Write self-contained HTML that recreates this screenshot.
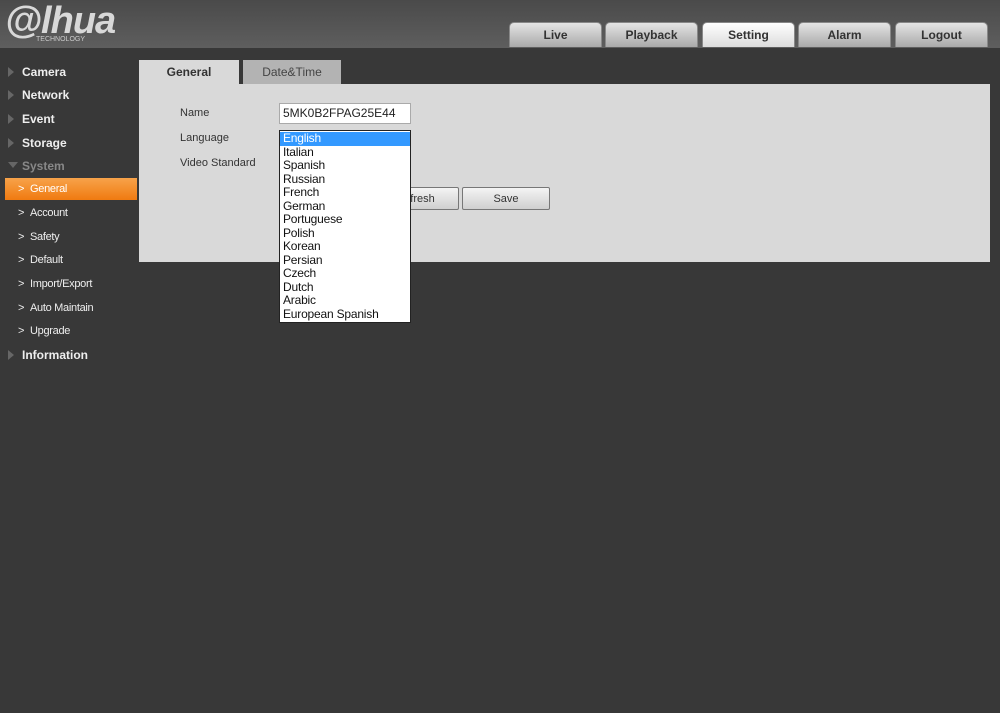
<!DOCTYPE html>
<html><head><style>
body{margin:0;width:1000px;height:713px;background:#383838;font-family:"Liberation Sans",Arial,sans-serif;position:relative;overflow:hidden}
.hdr{position:absolute;left:0;top:0;width:1000px;height:48px;background:linear-gradient(#4a4a4a,#5e5e5e)}
.logo{position:absolute;left:5px;top:0px;font-size:38px;font-weight:bold;font-style:italic;color:#d8d8d8;letter-spacing:-1px}
.tech{position:absolute;left:36px;top:36px;font-size:7px;color:#ccc}
.tt{position:absolute;top:22px;height:25px;width:93px;border-radius:5px 5px 0 0;background:linear-gradient(#e4e4e4,#a9a9a9);font-size:12px;font-weight:bold;color:#333;text-align:center;line-height:25px;box-sizing:border-box;border:1px solid #888;border-bottom:none}
.tt.on{background:linear-gradient(#fff,#dcdcdc)}
.nav{position:absolute;left:22px;font-size:12px;font-weight:bold;color:#eee}
.tri{position:absolute;left:8px;width:0;height:0;border-left:6px solid #666;border-top:5px solid transparent;border-bottom:5px solid transparent}
.sub{position:absolute;left:30px;font-size:11px;color:#eee;letter-spacing:-0.3px}
.chev{position:absolute;left:18px;font-size:11px;color:#eee}
.panel{position:absolute;left:139px;top:84px;width:851px;height:178px;background:#d9d9d9}
.lbl{position:absolute;font-size:11px;color:#333}
.btn{position:absolute;top:187px;height:23px;border:1px solid #777;border-radius:2px;background:linear-gradient(#f4f4f4,#cfcfcf);font-size:11px;color:#333;text-align:center;line-height:23px;box-sizing:border-box}
.dd{position:absolute;left:279px;top:130px;width:132px;height:193px;background:#fff;border:1px solid #222;box-sizing:border-box;font-size:12px;color:#111;padding-top:1px}
.dd div{height:13.5px;line-height:13.5px;padding-left:3px;letter-spacing:-0.2px}
</style></head><body>
<div class="hdr"><div class="logo">@lhua</div><div class="tech">TECHNOLOGY</div>
<div class="tt" style="left:509px">Live</div>
<div class="tt" style="left:605px">Playback</div>
<div class="tt on" style="left:702px">Setting</div>
<div class="tt" style="left:798px">Alarm</div>
<div class="tt" style="left:895px">Logout</div>
</div>
<div class="tri" style="top:67px"></div><div class="nav" style="top:65px">Camera</div>
<div class="tri" style="top:90px"></div><div class="nav" style="top:88px">Network</div>
<div class="tri" style="top:114px"></div><div class="nav" style="top:112px">Event</div>
<div class="tri" style="top:138px"></div><div class="nav" style="top:136px">Storage</div>
<div style="position:absolute;left:8px;top:162px;border-top:6px solid #666;border-left:5px solid transparent;border-right:5px solid transparent"></div><div class="nav" style="top:159px;color:#888">System</div>
<div style="position:absolute;left:5px;top:178px;width:132px;height:22px;background:linear-gradient(#f7a34a,#f07a10)"></div>
<div class="chev" style="top:183px;color:#fff">&gt;</div><div class="sub" style="top:183px;color:#fff">General</div>
<div class="chev" style="top:207px">&gt;</div><div class="sub" style="top:207px">Account</div>
<div class="chev" style="top:231px">&gt;</div><div class="sub" style="top:231px">Safety</div>
<div class="chev" style="top:254px">&gt;</div><div class="sub" style="top:254px">Default</div>
<div class="chev" style="top:278px">&gt;</div><div class="sub" style="top:278px">Import/Export</div>
<div class="chev" style="top:302px">&gt;</div><div class="sub" style="top:302px">Auto Maintain</div>
<div class="chev" style="top:325px">&gt;</div><div class="sub" style="top:325px">Upgrade</div>
<div class="tri" style="top:350px"></div><div class="nav" style="top:348px">Information</div>
<div style="position:absolute;left:139px;top:60px;width:100px;height:24px;background:#d9d9d9;font-size:12px;font-weight:bold;color:#333;text-align:center;line-height:24px">General</div>
<div style="position:absolute;left:243px;top:60px;width:98px;height:24px;background:#b3b3b3;font-size:12px;color:#444;text-align:center;line-height:24px">Date&amp;Time</div>
<div class="panel"></div>
<div class="lbl" style="left:180px;top:107px">Name</div>
<div class="lbl" style="left:180px;top:132px">Language</div>
<div class="lbl" style="left:180px;top:157px">Video Standard</div>
<div style="position:absolute;left:279px;top:103px;width:132px;height:21px;background:#fff;border:1px solid #aaa;box-sizing:border-box;font-size:12px;color:#222;line-height:19px;padding-left:3px">5MK0B2FPAG25E44</div>
<div class="btn" style="left:372px;width:87px">Refresh</div>
<div class="btn" style="left:462px;width:88px">Save</div>
<div class="dd">
<div style="background:#3399ff;color:#fff">English</div><div>Italian</div><div>Spanish</div><div>Russian</div><div>French</div><div>German</div><div>Portuguese</div><div>Polish</div><div>Korean</div><div>Persian</div><div>Czech</div><div>Dutch</div><div>Arabic</div><div>European Spanish</div>
</div>
</body></html>
